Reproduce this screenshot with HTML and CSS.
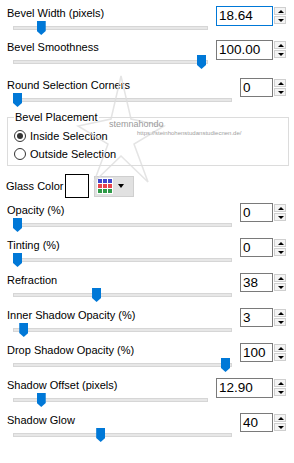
FILE: index.html
```html
<!DOCTYPE html>
<html>
<head>
<meta charset="utf-8">
<link rel="stylesheet" href="styles.css">
</head>
<body>
<div class="dlg">
  <div class="ctl wide r1">
    <div class="lbl">Bevel Width (pixels)</div>
    <div class="spin"><div class="box focus">18.64</div><div class="btns"><span class="b up"></span><span class="b dn"></span></div></div>
    <div class="slider"><div class="track"><div class="thumb" style="--p:0.129"></div></div></div>
  </div>
  <div class="ctl wide r2">
    <div class="lbl">Bevel Smoothness</div>
    <div class="spin"><div class="box">100.00</div><div class="btns"><span class="b up"></span><span class="b dn"></span></div></div>
    <div class="slider"><div class="track"><div class="thumb" style="--p:1"></div></div></div>
  </div>
  <div class="ctl r3">
    <div class="lbl">Round Selection Corners</div>
    <div class="spin"><div class="box">0</div><div class="btns"><span class="b up"></span><span class="b dn"></span></div></div>
    <div class="slider"><div class="track"><div class="thumb" style="--p:0"></div></div></div>
  </div>

  <fieldset class="group">
    <legend>Bevel Placement</legend>
    <div class="radio"><span class="dot on"></span>Inside Selection</div>
    <div class="radio"><span class="dot"></span>Outside Selection</div>
  </fieldset>

  <div class="glass">
    <span class="glbl">Glass Color</span>
    <span class="swatch"></span>
    <span class="cbtn">
      <span class="grid">
        <i class="bl"></i><i class="bl"></i><i class="bl"></i>
        <i class="rd"></i><i class="rd"></i><i class="rd"></i>
        <i class="gr"></i><i class="gr"></i><i class="gr"></i>
      </span>
      <span class="caret"></span>
    </span>
  </div>

  <div class="ctl r4">
    <div class="lbl">Opacity (%)</div>
    <div class="spin"><div class="box">0</div><div class="btns"><span class="b up"></span><span class="b dn"></span></div></div>
    <div class="slider"><div class="track"><div class="thumb" style="--p:0"></div></div></div>
  </div>
  <div class="ctl">
    <div class="lbl">Tinting (%)</div>
    <div class="spin"><div class="box">0</div><div class="btns"><span class="b up"></span><span class="b dn"></span></div></div>
    <div class="slider"><div class="track"><div class="thumb" style="--p:0"></div></div></div>
  </div>
  <div class="ctl">
    <div class="lbl">Refraction</div>
    <div class="spin"><div class="box">38</div><div class="btns"><span class="b up"></span><span class="b dn"></span></div></div>
    <div class="slider"><div class="track"><div class="thumb" style="--p:0.38"></div></div></div>
  </div>
  <div class="ctl">
    <div class="lbl">Inner Shadow Opacity (%)</div>
    <div class="spin"><div class="box">3</div><div class="btns"><span class="b up"></span><span class="b dn"></span></div></div>
    <div class="slider"><div class="track"><div class="thumb" style="--p:0.03"></div></div></div>
  </div>
  <div class="ctl">
    <div class="lbl">Drop Shadow Opacity (%)</div>
    <div class="spin"><div class="box">100</div><div class="btns"><span class="b up"></span><span class="b dn"></span></div></div>
    <div class="slider"><div class="track"><div class="thumb" style="--p:1"></div></div></div>
  </div>
  <div class="ctl wide">
    <div class="lbl">Shadow Offset (pixels)</div>
    <div class="spin"><div class="box">12.90</div><div class="btns"><span class="b up"></span><span class="b dn"></span></div></div>
    <div class="slider"><div class="track"><div class="thumb" style="--p:0.129"></div></div></div>
  </div>
  <div class="ctl">
    <div class="lbl">Shadow Glow</div>
    <div class="spin"><div class="box">40</div><div class="btns"><span class="b up"></span><span class="b dn"></span></div></div>
    <div class="slider"><div class="track"><div class="thumb" style="--p:0.40"></div></div></div>
  </div>

  <div class="wm">
    <svg class="star" width="90" height="110" viewBox="0 0 90 110">
      <polygon points="45,2 55,45 88,52 58,70 72,108 45,82 18,108 32,70 2,52 35,45" fill="none" stroke="#dedede" stroke-width="1.5"/>
    </svg>
    <span class="wm1">stemnahondo</span>
    <span class="wm2">https://steinhohenstudanstudiecnen.de/</span>
  </div>
</div>
</body>
</html>
```

FILE: styles.css
```css
* { box-sizing: border-box; }
html, body { margin: 0; padding: 0; background: #fff; }
body {
  font-family: "Liberation Sans", Arial, sans-serif;
  font-size: 11px;
  color: #000;
  width: 294px;
  height: 463px;
  overflow: hidden;
}
.dlg {
  position: relative;
  padding: 6px 7px 0 7px;
}
.ctl {
  display: grid;
  grid-template-columns: 1fr auto;
  grid-template-rows: 15px 14px;
  column-gap: 8px;
  margin-bottom: 6px;
}
.ctl.r1 { margin-bottom: 5px; }
.ctl.r2 { margin-bottom: 9px; }
.ctl.r3 { margin-bottom: 3px; }
.lbl {
  grid-row: 1;
  grid-column: 1;
  line-height: 15px;
  white-space: nowrap;
}
.spin {
  grid-row: 1 / span 2;
  grid-column: 2;
  display: flex;
  align-items: flex-start;
  gap: 1px;
  margin-right: 1px;
}
.box {
  width: 33px;
  height: 19px;
  border: 1px solid #7a7a7a;
  font-size: 13.5px;
  line-height: 17px;
  padding-left: 2px;
  background: #fff;
}
.wide .box { width: 57px; height: 20px; line-height: 18px; }
.box.focus { border-color: #0078d7; }
.btns {
  display: flex;
  flex-direction: column;
  gap: 1px;
  padding-top: 1px;
}
.b {
  position: relative;
  display: block;
  width: 12px;
  height: 8px;
  border: 1px solid #cfcfcf;
  background: #f4f4f4;
}
.b::after {
  content: "";
  position: absolute;
  left: 3px;
  width: 0;
  height: 0;
  border-left: 3px solid transparent;
  border-right: 3px solid transparent;
}
.up::after { top: 2px; border-bottom: 3px solid #000; }
.dn::after { top: 2px; border-top: 3px solid #000; }
.slider {
  grid-row: 2;
  grid-column: 1;
  padding: 5px 0 0 6px;
}
.track {
  position: relative;
  height: 4px;
  background: #e7e7e7;
  border: 1px solid #d6d6d6;
}
.thumb {
  position: absolute;
  top: -6px;
  left: calc(var(--p) * (100% - 9px) - 1px);
  width: 9px;
  height: 14px;
  background: #0078d7;
  clip-path: polygon(0 0, 100% 0, 100% 72%, 50% 100%, 0 72%);
}
.group {
  margin: 0 -2px 8px 0;
  padding: 2px 6px 2px 6px;
  border: 1px solid #dcdcdc;
  min-width: 0;
}
.group legend {
  padding: 0 1px;
  line-height: 15px;
}
.radio {
  display: flex;
  align-items: center;
  gap: 4px;
  height: 18px;
}
.dot {
  width: 12px;
  height: 12px;
  border: 1px solid #333;
  border-radius: 50%;
  background: #fff;
  display: flex;
  align-items: center;
  justify-content: center;
}
.dot.on::after {
  content: "";
  width: 6px;
  height: 6px;
  border-radius: 50%;
  background: #333;
}
.glass {
  display: flex;
  align-items: center;
  height: 24px;
  margin-bottom: 5px;
}
.glbl { white-space: nowrap; margin-left: -1px; margin-right: 2px; }
.swatch {
  width: 24px;
  height: 24px;
  border: 1px solid #000;
  background: #fff;
}
.cbtn {
  margin-left: 5px;
  width: 40px;
  height: 21px;
  border: 1px solid #cfcfcf;
  background: #e1e1e1;
  display: flex;
  align-items: center;
  padding-left: 2px;
  gap: 5px;
}
.grid {
  display: grid;
  grid-template-columns: repeat(3, 4px);
  grid-template-rows: repeat(3, 4px);
  gap: 1px;
  padding: 1px;
  background: #fff;
}
.grid i { display: block; }
.grid .bl { background: #3f48cc; }
.grid .rd { background: #e8434b; }
.grid .gr { background: #2f9a48; }
.caret {
  width: 0;
  height: 0;
  border-left: 3px solid transparent;
  border-right: 3px solid transparent;
  border-top: 4px solid #000;
}
.wm {
  position: absolute;
  left: 0;
  top: 0;
  width: 294px;
  height: 463px;
  pointer-events: none;
}
.star { position: absolute; left: 76px; top: 74px; opacity: 0.8; }
.wm1 {
  position: absolute;
  left: 109px;
  top: 119px;
  font-size: 9px;
  color: #9a9a9a;
}
.wm2 {
  position: absolute;
  left: 137px;
  top: 130px;
  font-size: 6px;
  color: #a0a0a0;
}
```
